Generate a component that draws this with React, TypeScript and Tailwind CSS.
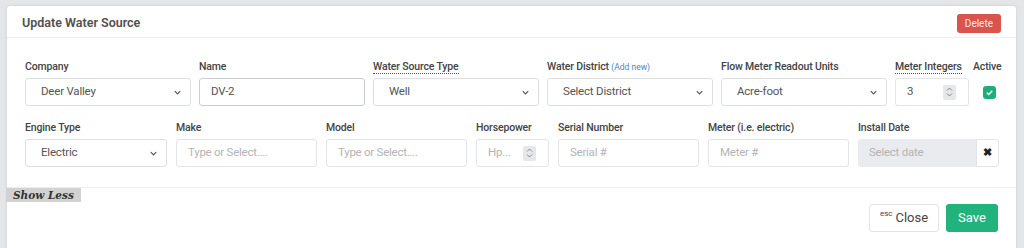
import React from 'react';

const font = { fontFamily: 'Roboto, "Liberation Sans", sans-serif' };

function Chevron() {
  return (
    <svg width="9" height="9" viewBox="0 0 10 10" className="text-[#555]">
      <path d="M2 3.5 L5 6.5 L8 3.5" fill="none" stroke="currentColor" strokeWidth="1.3" />
    </svg>
  );
}

function Spinner() {
  return (
    <span className="flex h-[15px] w-[13px] flex-col items-center justify-center rounded-[2px] bg-[#e6e7e9]">
      <svg width="7" height="12" viewBox="0 0 7 12" className="text-[#888]">
        <path d="M1 4.5 L3.5 2 L6 4.5 M1 7.5 L3.5 10 L6 7.5" fill="none" stroke="currentColor" strokeWidth="1" />
      </svg>
    </span>
  );
}

function Label({ children, dotted }: { children: React.ReactNode; dotted?: boolean }) {
  return (
    <div className="mb-[4px] h-[15px] whitespace-nowrap text-[10.5px] font-medium leading-[15px] tracking-[-0.15px] text-[#444]">
      {dotted ? <span className="border-b border-dotted border-[#555]">{children}</span> : children}
    </div>
  );
}

function SelectBox({ value }: { value: string }) {
  return (
    <div className="flex h-[28px] items-center justify-between rounded-[3px] border border-[#dcdfe3] bg-white pl-[15px] pr-[8px]">
      <span className="text-[11.5px] tracking-[-0.2px] text-[#555]">{value}</span>
      <Chevron />
    </div>
  );
}

function TextBox({ value, placeholder, spinner }: { value?: string; placeholder?: string; spinner?: boolean }) {
  return (
    <div className="flex h-[28px] items-center justify-between rounded-[3px] border border-[#e1e4e8] bg-white pl-[11px] pr-[12px]">
      {value ? (
        <span className="text-[11.5px] tracking-[-0.2px] text-[#555]">{value}</span>
      ) : (
        <span className="text-[11.5px] tracking-[-0.25px] text-[#b4b4b4]">{placeholder}</span>
      )}
      {spinner && <Spinner />}
    </div>
  );
}

export default function App() {
  return (
    <div className="h-[248px] w-[1024px] overflow-hidden bg-[#e3e5e7] pl-[7px] pr-[8px] pt-[6px]" style={font}>
      <div className="h-[260px] rounded-t-[3px] bg-white shadow-[0_0_3px_rgba(0,0,0,0.12)]">
        {/* Header */}
        <div className="flex h-[32px] items-center justify-between border-b border-[#eceef0] px-[15px] pt-[4px]">
          <h2 className="text-[12.5px] font-semibold text-[#505050]">Update Water Source</h2>
          <button className="h-[19px] rounded-[3px] bg-[#d9534f] px-[8px] text-[10px] text-[#fbe9e8]">Delete</button>
        </div>

        {/* Body */}
        <div className="pb-[20px] pl-[18px] pr-[10px] pt-[21px]">
          <div className="flex gap-[8px]">
            <div className="w-[166px] shrink-0">
              <Label>Company</Label>
              <SelectBox value="Deer Valley" />
            </div>
            <div className="w-[166px] shrink-0">
              <Label>Name</Label>
              <div className="flex h-[28px] items-center rounded-[3px] border border-[#c9cdd2] bg-white pl-[11px] text-[11.5px] tracking-[-0.2px] text-[#555]">DV-2</div>
            </div>
            <div className="w-[166px] shrink-0">
              <Label dotted>Water Source Type</Label>
              <SelectBox value="Well" />
            </div>
            <div className="w-[166px] shrink-0">
              <Label>
                Water District <span className="text-[8.5px] font-normal tracking-normal text-[#4a86c5]">(Add new)</span>
              </Label>
              <SelectBox value="Select District" />
            </div>
            <div className="w-[166px] shrink-0">
              <Label>Flow Meter Readout Units</Label>
              <SelectBox value="Acre-foot" />
            </div>
            <div className="w-[74px] shrink-0">
              <Label dotted>Meter Integers</Label>
              <TextBox value="3" spinner />
            </div>
            <div className="-ml-[4px] w-[32px] shrink-0">
              <Label>Active</Label>
              <div className="flex h-[28px] items-center pl-[10px]">
                <span className="flex h-[13px] w-[13px] items-center justify-center rounded-[3px] bg-[#1fae7a]">
                  <svg width="9" height="9" viewBox="0 0 10 10">
                    <path d="M2 5.2 L4.2 7.3 L8 3" fill="none" stroke="white" strokeWidth="1.6" />
                  </svg>
                </span>
              </div>
            </div>
          </div>

          <div className="mt-[14px] flex gap-[9px]">
            <div className="w-[142px] shrink-0">
              <Label>Engine Type</Label>
              <SelectBox value="Electric" />
            </div>
            <div className="w-[141px] shrink-0">
              <Label>Make</Label>
              <TextBox placeholder="Type or Select...." />
            </div>
            <div className="w-[141px] shrink-0">
              <Label>Model</Label>
              <TextBox placeholder="Type or Select...." />
            </div>
            <div className="w-[73px] shrink-0">
              <Label>Horsepower</Label>
              <TextBox placeholder="Hp..." spinner />
            </div>
            <div className="w-[141px] shrink-0">
              <Label>Serial Number</Label>
              <TextBox placeholder="Serial #" />
            </div>
            <div className="w-[141px] shrink-0">
              <Label>Meter (i.e. electric)</Label>
              <TextBox placeholder="Meter #" />
            </div>
            <div className="w-[141px] shrink-0">
              <Label>Install Date</Label>
              <div className="flex h-[28px]">
                <div className="flex flex-1 items-center rounded-l-[3px] bg-[#e9ebee] pl-[11px] text-[11.5px] tracking-[-0.25px] text-[#b4b4b4]">Select date</div>
                <div className="flex w-[23px] items-center justify-center rounded-r-[3px] border border-[#e1e4e8] bg-white text-[11px] font-bold text-[#222]">✖</div>
              </div>
            </div>
          </div>
        </div>

        {/* Footer */}
        <div className="border-t border-[#eceef0]">
          <div
            className="-ml-[1px] w-fit bg-[#d2d2d2] pl-[7px] pr-[7px] text-[10.5px] font-bold italic leading-[14px] text-[#333]"
            style={{ fontFamily: '"DejaVu Serif", "Liberation Serif", serif' }}
          >
            Show Less
          </div>
          <div className="mt-[2px] flex justify-end gap-[7px] pr-[18px]">
            <button className="flex h-[28px] w-[70px] items-center justify-center rounded-[3px] border border-[#e3e5e8] bg-white text-[13px] text-[#444]">
              <sup className="mr-[3px] text-[8px]">esc</sup>Close
            </button>
            <button className="h-[28px] w-[52px] rounded-[3px] bg-[#22b37c] text-[13px] text-white">Save</button>
          </div>
        </div>
      </div>
    </div>
  );
}
